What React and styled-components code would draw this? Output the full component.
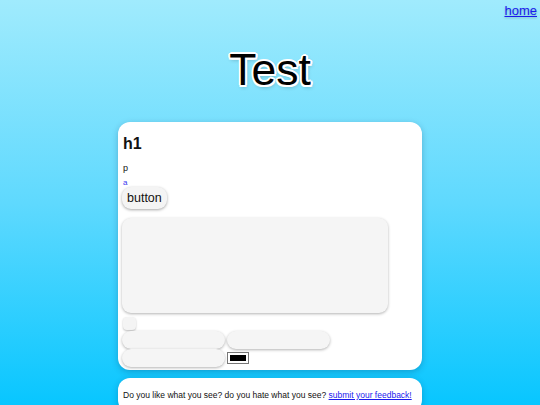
import styled, { createGlobalStyle } from "styled-components";

const GlobalStyle = createGlobalStyle`
    html, body {
        margin: 0;
        padding: 0;
    }

    body {
        min-height: 100vh;
        font-family: "Liberation Sans", Arial, sans-serif;
        background: linear-gradient(180deg, #a0ebfd 0%, #5fd9fe 50%, #08c6ff 100%);
        background-attachment: fixed;
        overflow: hidden;
    }
`;

const Page = styled.div`
    display: flex;
    flex-direction: column;
    align-items: center;
    min-height: 100vh;
`;

const Nav = styled.nav`
    display: flex;
    justify-content: flex-end;
    align-self: stretch;
    padding: 3px 3px 0 0;
`;

const NavLink = styled.a`
    font-size: 13px;
    color: #1a1aee;
    text-shadow: 0 1px 2px rgba(0, 0, 0, 0.25);
`;

const Title = styled.h1`
    margin: 28px 0 27px;
    font-size: 44.5px;
    font-weight: 400;
    line-height: 1.1;
    color: #000;
    text-shadow:
        -2px 0 0 #fff, 2px 0 0 #fff, 0 -2px 0 #fff, 0 2px 0 #fff,
        -1.5px -1.5px 0 #fff, 1.5px -1.5px 0 #fff, -1.5px 1.5px 0 #fff, 1.5px 1.5px 0 #fff,
        1px 2px 4px rgba(0, 0, 0, 0.3);
`;

const Card = styled.section`
    box-sizing: border-box;
    width: 304px;
    padding: ${props => props.footer ? "12px 5px 12px" : "8px 5px 3px"};
    margin-bottom: 8px;
    background: #fff;
    border-radius: 12px;
    box-shadow: 0 2px 6px rgba(0, 40, 80, 0.25);
`;

const Heading = styled.h2`
    margin: 5px 0 10px;
    font-size: 16px;
    font-weight: 700;
    color: #111;
`;

const Para = styled.p`
    margin: 0 0 5px;
    font-size: 9px;
    color: #111;
`;

const SmallLink = styled.a`
    display: block;
    font-size: 8px;
    color: #3a3af0;
    text-decoration: none;
`;

const Button = styled.button`
    display: block;
    margin: 0 0 9px -1px;
    padding: 4px 5px;
    font-family: inherit;
    font-size: 12.5px;
    color: #111;
    background: #f4f4f4;
    border: none;
    border-radius: 9px;
    box-shadow: 0 1px 3px rgba(0, 0, 0, 0.35);
`;

const TextArea = styled.textarea`
    display: block;
    box-sizing: border-box;
    width: 266px;
    height: 95px;
    margin: 0 0 4px -1px;
    background: #f5f5f5;
    border: none;
    border-radius: 9px;
    resize: none;
    box-shadow: 0 1px 3px rgba(0, 0, 0, 0.3);
`;

const Check = styled.span`
    display: block;
    width: 13px;
    height: 13px;
    margin: 0 0 1px 0;
    background: #f4f4f4;
    border-radius: 4px;
    box-shadow: 0 1px 2px rgba(0, 0, 0, 0.25);
`;

const Fields = styled.div`
    display: flex;
    flex-wrap: wrap;
    align-items: center;
    column-gap: 2px;
    margin-left: -1px;
`;

const Field = styled.input`
    box-sizing: border-box;
    width: 103px;
    height: 18px;
    background: #f5f5f5;
    border: none;
    border-radius: 9px;
    box-shadow: 0 1px 3px rgba(0, 0, 0, 0.3);
`;

const Swatch = styled.span`
    display: block;
    width: 16px;
    height: 6px;
    margin-left: 1px;
    background: #000;
    border: 2px solid #fff;
    outline: 1px solid #777;
`;

const FooterText = styled.p`
    margin: 0;
    font-size: 8.5px;
    color: #111;
    white-space: nowrap;
`;

const FooterLink = styled.a`
    color: #1a1aee;
`;

const App = () => {
    return (
        <Page>
            <GlobalStyle />
            <Nav>
                <NavLink href="#">home</NavLink>
            </Nav>
            <Title>Test</Title>
            <Card>
                <Heading>h1</Heading>
                <Para>p</Para>
                <SmallLink href="#">a</SmallLink>
                <Button>button</Button>
                <TextArea />
                <Check />
                <Fields>
                    <Field type="text" />
                    <Field type="text" />
                    <Field type="text" />
                    <Swatch />
                </Fields>
            </Card>
            <Card footer>
                <FooterText>
                    Do you like what you see? do you hate what you see? <FooterLink href="#">submit your feedback!</FooterLink>
                </FooterText>
            </Card>
        </Page>
    );
};

export default App;
